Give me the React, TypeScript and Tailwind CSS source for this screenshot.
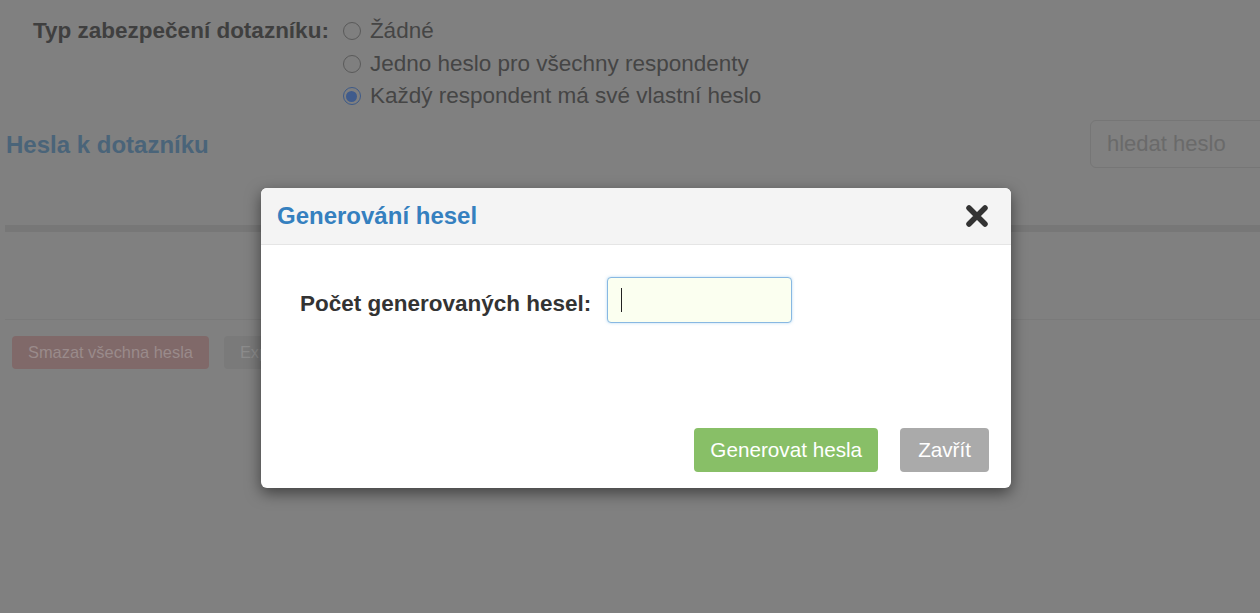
import { useState } from "react"

const font = { fontFamily: '"Liberation Sans", Arial, sans-serif' }

function Radio({ checked }: { checked?: boolean }) {
  return (
    <span
      className={`inline-flex h-[18px] w-[18px] shrink-0 items-center justify-center rounded-full border ${
        checked ? "border-[#3d5a88]" : "border-[#5a5a5a]"
      } bg-[#7f7f7f]`}
    >
      {checked && <span className="h-[11px] w-[11px] rounded-full bg-[#3f5b8c]" />}
    </span>
  )
}

export default function App() {
  const [count, setCount] = useState("")
  const options = [
    "Žádné",
    "Jedno heslo pro všechny respondenty",
    "Každý respondent má své vlastní heslo",
  ]

  return (
    <div className="relative h-[613px] w-[1260px] overflow-hidden bg-[#808080]" style={font}>
      {/* page behind the dialog, already dimmed */}
      <div className="flex pl-[33px] pt-[15px]">
        <div className="pr-[14px] text-[22.5px] font-bold leading-[32.5px] text-[#3f3f3f]">
          Typ zabezpečení dotazníku:
        </div>
        <div className="flex flex-col">
          {options.map((o, i) => (
            <label key={o} className="flex h-[32.5px] items-center gap-[9px] text-[22.5px] text-[#454545]">
              <Radio checked={i === 2} />
              {o}
            </label>
          ))}
        </div>
      </div>

      <div className="mt-[7px] flex items-start justify-between pl-[6px]">
        <h2 className="pt-[7px] text-[24px] font-bold text-[#4a6479]">Hesla k dotazníku</h2>
        <div className="mr-[-10px] flex h-[48px] w-[180px] items-center rounded-[6px] border border-[#767676] pl-[16px] text-[22px] text-[#6a6a6a]">
          hledat heslo
        </div>
      </div>

      <div className="ml-[5px] mt-[57px] h-[7px] bg-[#777777]" />
      <div className="ml-[5px] mt-[87px] h-px bg-[#7a7a7a]" />

      <div className="flex gap-[15px] pl-[12px] pt-[16px]">
        <div className="flex h-[33px] items-center rounded-[4px] bg-[#806969] px-[16px] text-[16.4px] text-[#9a8b8b]">
          Smazat všechna hesla
        </div>
        <div className="flex h-[33px] items-center rounded-[4px] bg-[#7a7a7a] px-[16px] text-[16.4px] text-[#8c8c8c]">
          Exportovat hesla
        </div>
      </div>

      {/* dialog */}
      <div className="absolute left-[261px] top-[188px] flex h-[300px] w-[750px] flex-col overflow-hidden rounded-[6px] bg-white shadow-[0_5px_15px_rgba(0,0,0,0.5)]">
        <div className="flex h-[57px] shrink-0 items-center justify-between border-b border-[#e5e5e5] bg-[#f4f4f4] pl-[16px] pr-[20px]">
          <h3 className="text-[24px] font-bold text-[#3580bf]">Generování hesel</h3>
          <svg width="26" height="26" viewBox="0 0 26 26" className="mr-[1px]">
            <path d="M5 5 L21 21 M21 5 L5 21" stroke="#333" strokeWidth="5.5" strokeLinecap="round" />
          </svg>
        </div>

        <div className="flex flex-1 items-start pl-[39px] pt-[32px]">
          <label className="pt-[10px] pr-[16px] text-[22.5px] font-bold text-[#333]">
            Počet generovaných hesel:
          </label>
          <div className="relative">
            <input
              value={count}
              onChange={(e) => setCount(e.target.value)}
              className="h-[46px] w-[185px] rounded-[4px] border border-[#88b8e2] bg-[#fbfff0] px-[14px] text-[20px] text-[#333] shadow-[0_0_3px_rgba(102,175,233,0.5)] outline-none"
            />
            {count === "" && (
              <span className="pointer-events-none absolute left-[14px] top-[11px] h-[24px] w-px bg-[#222]" />
            )}
          </div>
        </div>

        <div className="flex justify-end gap-[22px] pb-[16px] pr-[22px]">
          <button className="h-[44px] rounded-[4px] bg-[#88bf67] px-[16px] text-[20.7px] text-white">
            Generovat hesla
          </button>
          <button className="h-[44px] rounded-[4px] bg-[#aaaaaa] px-[18px] text-[20.7px] text-white">
            Zavřít
          </button>
        </div>
      </div>
    </div>
  )
}
